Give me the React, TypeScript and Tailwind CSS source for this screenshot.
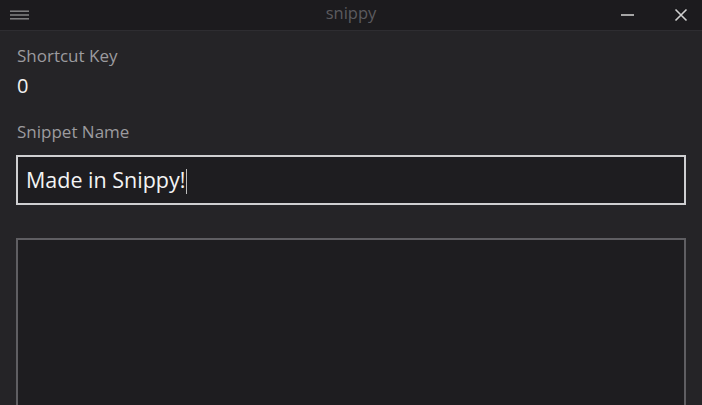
export default function App() {
  return (
    <div
      className="w-[702px] h-[405px] overflow-hidden bg-[#252427] flex flex-col"
      style={{ fontFamily: '"Segoe UI", "Open Sans", "Noto Sans", sans-serif' }}
    >
      {/* title bar */}
      <div className="h-[31px] shrink-0 bg-[#1c1b1e] border-b border-[#2e2d31] flex items-center">
        <div className="w-[104px] flex pl-[10px]">
          <svg width="20" height="10" viewBox="0 0 20 10">
            <rect x="0" y="0.5" width="19" height="1.4" fill="#8a8a8a" />
            <rect x="0" y="4.3" width="19" height="1.4" fill="#8a8a8a" />
            <rect x="0" y="8.1" width="19" height="1.4" fill="#8a8a8a" />
          </svg>
        </div>
        <div className="flex-1 text-center text-[16.5px] text-[#5b5a5e] -mt-[3px]">snippy</div>
        <div className="w-[104px] flex items-center justify-end h-full pr-[14px] gap-[39px]">
          <svg width="14" height="14" viewBox="0 0 14 14">
            <rect x="0" y="6.2" width="13" height="1.6" fill="#c8c8c8" />
          </svg>
          <svg width="14" height="14" viewBox="0 0 14 14">
            <path d="M1.5 1.5 L12.5 12.5 M12.5 1.5 L1.5 12.5" stroke="#d0d0d0" strokeWidth="1.6" />
          </svg>
        </div>
      </div>

      {/* body */}
      <div className="flex-1 flex flex-col px-[16px] pt-[14px]">
        <div className="text-[17px] leading-[22px] text-[#9c9b9f] pl-[1px]">Shortcut Key</div>
        <div className="text-[20px] leading-[26px] text-[#f2f2f2] pl-[1px] mt-[6px]">0</div>
        <div className="text-[17px] leading-[22px] text-[#9c9b9f] pl-[1px] mt-[22px]">Snippet Name</div>
        <div className="mt-[12px] h-[50px] shrink-0 border-2 border-[#cfcfd1] bg-[#1e1d20] flex items-center px-[8px]">
          <span className="text-[21.5px] text-[#f4f4f4] leading-none">Made in Snippy!</span>
          <span className="w-[1px] h-[25px] bg-[#bdbdbd] ml-[1px] mt-[3px]" />
        </div>
        <div className="mt-[33px] flex-1 border-2 border-b-0 border-[#5f5e62] bg-[#1e1d20]" />
      </div>
    </div>
  );
}
